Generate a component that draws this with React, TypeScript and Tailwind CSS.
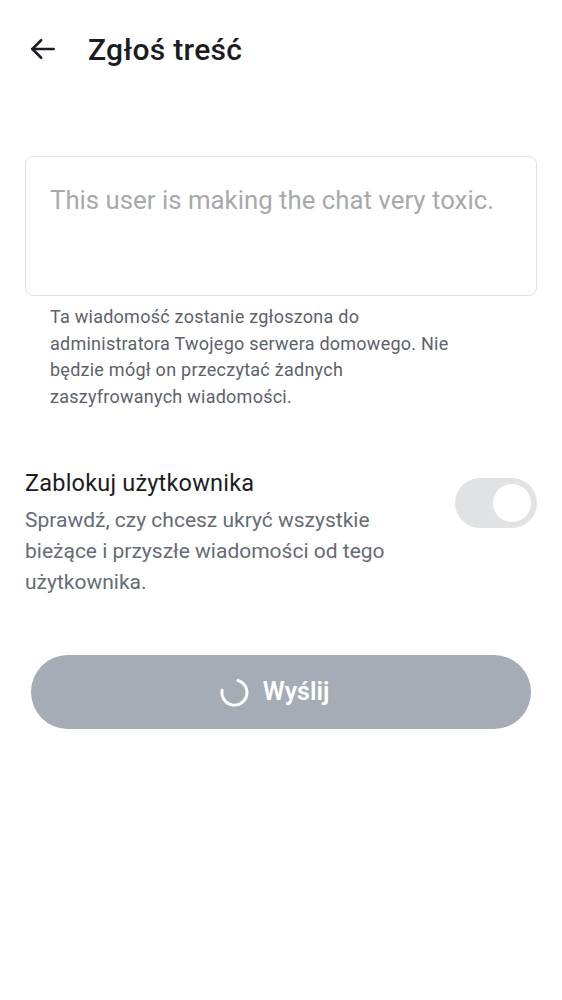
import React from "react";

export default function App() {
  return (
    <div className="w-[562px] h-[1000px] bg-white" style={{ fontFamily: "Roboto, 'Noto Sans', sans-serif" }}>
      <div className="flex items-center h-[98px] pl-[28px]">
        <svg width="30" height="30" viewBox="0 0 24 24" fill="none" stroke="#1b1d22" strokeWidth="2.1" strokeLinecap="round" strokeLinejoin="round">
          <path d="M20.5 12H3.5" />
          <path d="M10.5 5l-7 7 7 7" />
        </svg>
        <div className="ml-[30px] text-[30px] font-medium text-[#1b1d22] tracking-[0.3px]">Zgłoś treść</div>
      </div>
      <div className="px-[25px] pt-[58px]">
        <div className="h-[140px] rounded-[8px] border border-[#e1e2e4] px-[24px] pt-[27px]">
          <div className="text-[25.8px] text-[#a7a9ab] leading-[32px]">This user is making the chat very toxic.</div>
        </div>
        <div className="pl-[25px] pr-[70px] pt-[8px] text-[18px] leading-[26.5px] text-[#5c626b] tracking-[0.25px]">
          Ta wiadomość zostanie zgłoszona do administratora Twojego serwera domowego. Nie będzie mógł on przeczytać żadnych zaszyfrowanych wiadomości.
        </div>
        <div className="flex items-start mt-[57px]">
          <div className="flex-1 pr-[30px]">
            <div className="text-[23.5px] leading-[32px] text-[#1b1d22] tracking-[0.2px]">Zablokuj użytkownika</div>
            <div className="text-[21px] leading-[31px] text-[#656c76] mt-[6px] pr-[10px]">
              Sprawdź, czy chcesz ukryć wszystkie bieżące i przyszłe wiadomości od tego użytkownika.
            </div>
          </div>
          <div className="mt-[11px] w-[82px] h-[50px] rounded-full bg-[#e1e2e3] flex items-center justify-end pr-[6px]">
            <div className="w-[38px] h-[38px] rounded-full bg-white" />
          </div>
        </div>
        <div className="mt-[57px] mx-[6px] h-[74px] rounded-full bg-[#a6acb5] flex items-center justify-center gap-[13px] pr-[14px]">
          <svg width="31" height="31" viewBox="0 0 32 32" fill="none">
            <path d="M19.5 3.5 A13 13 0 1 1 3.2 13.5" stroke="white" strokeWidth="3" strokeLinecap="round" />
          </svg>
          <div className="text-[25px] font-semibold text-white">Wyślij</div>
        </div>
      </div>
    </div>
  );
}
